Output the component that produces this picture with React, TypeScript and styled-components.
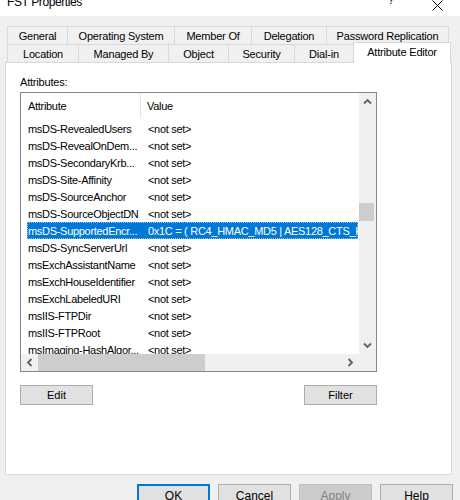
import React from 'react';
import styled, { createGlobalStyle } from 'styled-components';

const GlobalStyle = createGlobalStyle`
    body {
        margin: 0;
        background: #f0f0f0;
        font-family: "Liberation Sans", Arial, sans-serif;
        font-size: 11px;
        color: #000;
    }
`;

const Window = styled.div`
    width: 460px;
    height: 500px;
    overflow: hidden;
    display: flex;
    flex-direction: column;
    background: #f0f0f0;
`;

const TitleBar = styled.div`
    height: 16px;
    flex: none;
    background: #fff;
    display: flex;
    align-items: flex-end;
    overflow: hidden;
    padding: 0 0 7px 7px;
    box-sizing: border-box;
`;

const Title = styled.div`
    font-size: 12px;
    line-height: 14px;
    letter-spacing: -0.4px;
    flex: 1;
`;

const TitleHelp = styled.div`
    font-size: 12px;
    line-height: 14px;
    width: 46px;
    text-align: center;
    margin-bottom: 2px;
`;

const CloseBox = styled.div`
    width: 46px;
    display: flex;
    justify-content: center;
    margin-bottom: -2px;
`;

const Body = styled.div`
    padding: 10px 0 0 5px;
    display: flex;
    flex-direction: column;
`;

const TabRow = styled.div`
    display: flex;
    align-items: flex-end;
    height: 18px;
    margin-left: 2px;
    position: relative;
`;

const Tab = styled.div<{ w: number; active?: boolean }>`
    width: ${p => p.w}px;
    height: ${p => (p.active ? 21 : 18)}px;
    box-sizing: border-box;
    display: flex;
    align-items: center;
    justify-content: center;
    white-space: nowrap;
    letter-spacing: -0.2px;
    background: ${p => (p.active ? '#fff' : '#f0f0f0')};
    border: 1px solid #d9d9d9;
    border-right: ${p => (p.active ? '1px solid #d9d9d9' : 'none')};
    border-bottom: none;
    margin-bottom: ${p => (p.active ? -1 : 0)}px;
    padding-bottom: ${p => (p.active ? 3 : 0)}px;
    position: relative;
    z-index: ${p => (p.active ? 2 : 0)};
    &:last-child {
        border-right: 1px solid #d9d9d9;
    }
`;

const Panel = styled.div`
    width: 447px;
    height: 413px;
    box-sizing: border-box;
    background: #fff;
    border: 1px solid #d9d9d9;
    padding: 12px 0 0 14px;
    display: flex;
    flex-direction: column;
    position: relative;
    z-index: 1;
`;

const Label = styled.div`
    line-height: 14px;
    margin-bottom: 3px;
    letter-spacing: -0.2px;
`;

const ListBox = styled.div`
    width: 357px;
    height: 280px;
    box-sizing: border-box;
    border: 1px solid #828790;
    display: grid;
    grid-template-columns: 1fr 17px;
    grid-template-rows: 1fr 17px;
    background: #fff;
`;

const Viewport = styled.div`
    overflow: hidden;
    display: flex;
    flex-direction: column;
`;

const HeaderRow = styled.div`
    display: flex;
    height: 25px;
    flex: none;
    margin-bottom: 2px;
`;

const HeaderCell = styled.div<{ w?: number }>`
    ${p => (p.w ? `width: ${p.w}px; border-right: 1px solid #e5e5e5;` : 'flex: 1;')}
    box-sizing: border-box;
    display: flex;
    align-items: center;
    padding-left: ${p => (p.w ? 7 : 6)}px;
    letter-spacing: -0.3px;
`;

const Row = styled.div<{ selected?: boolean }>`
    display: flex;
    height: 17px;
    flex: none;
    margin-left: 6px;
    width: 331px;
    overflow: hidden;
    align-items: center;
    white-space: nowrap;
    letter-spacing: -0.3px;
    background: ${p => (p.selected ? '#0078d7' : 'transparent')};
    color: ${p => (p.selected ? '#fff' : '#000')};
    outline: ${p => (p.selected ? '1px dotted rgba(255,255,255,0.55)' : 'none')};
    outline-offset: -1px;
`;

const NameCell = styled.div`
    width: 114px;
    flex: none;
    padding-left: 1px;
    box-sizing: border-box;
    overflow: hidden;
`;

const ValueCell = styled.div`
    padding-left: 7px;
`;

const VScroll = styled.div`
    background: #f0f0f0;
    display: flex;
    flex-direction: column;
`;

const HScroll = styled.div`
    background: #f0f0f0;
    display: flex;
    align-items: stretch;
`;

const Corner = styled.div`
    background: #f0f0f0;
`;

const ArrowButton = styled.div`
    width: 17px;
    height: 17px;
    flex: none;
    display: flex;
    align-items: center;
    justify-content: center;
`;

const Track = styled.div<{ horizontal?: boolean }>`
    flex: 1;
    display: flex;
    flex-direction: ${p => (p.horizontal ? 'row' : 'column')};
`;

const Thumb = styled.div<{ offset: number; size: number; horizontal?: boolean }>`
    background: #cdcdcd;
    ${p =>
        p.horizontal
            ? `width: ${p.size}px; margin-left: ${p.offset}px; height: 17px;`
            : `height: ${p.size}px; margin-top: ${p.offset}px; width: 15px; margin-left: 0;`}
`;

const ActionRow = styled.div`
    width: 357px;
    display: flex;
    justify-content: space-between;
    margin-top: 13px;
`;

const Button = styled.button<{ tall?: boolean; focused?: boolean }>`
    width: 73px;
    height: ${p => (p.tall ? 23 : 20)}px;
    box-sizing: border-box;
    background: ${p => (p.disabled ? '#cccccc' : '#e1e1e1')};
    border: ${p => (p.focused ? '2px solid #0078d7' : p.disabled ? '1px solid #bfbfbf' : '1px solid #adadad')};
    color: ${p => (p.disabled ? '#838383' : '#000')};
    font-family: "Liberation Sans", Arial, sans-serif;
    font-size: ${p => (p.tall ? 12 : 11)}px;
    padding: 0;
    border-radius: 0;
`;

const DialogButtons = styled.div`
    display: flex;
    justify-content: flex-end;
    gap: 8px;
    padding-right: 7px;
    margin-top: 9px;
`;

type Attr = { name: string; value: string; selected?: boolean };

const attributes: Attr[] = [
    { name: 'msDS-RevealedUsers', value: '<not set>' },
    { name: 'msDS-RevealOnDem...', value: '<not set>' },
    { name: 'msDS-SecondaryKrb...', value: '<not set>' },
    { name: 'msDS-Site-Affinity', value: '<not set>' },
    { name: 'msDS-SourceAnchor', value: '<not set>' },
    { name: 'msDS-SourceObjectDN', value: '<not set>' },
    {
        name: 'msDS-SupportedEncr...',
        value: '0x1C = ( RC4_HMAC_MD5 | AES128_CTS_HMAC_SHA1_96 | AES256_CTS_HMAC_SHA1_96 )',
        selected: true,
    },
    { name: 'msDS-SyncServerUrl', value: '<not set>' },
    { name: 'msExchAssistantName', value: '<not set>' },
    { name: 'msExchHouseIdentifier', value: '<not set>' },
    { name: 'msExchLabeledURI', value: '<not set>' },
    { name: 'msIIS-FTPDir', value: '<not set>' },
    { name: 'msIIS-FTPRoot', value: '<not set>' },
    { name: 'msImaging-HashAlgor...', value: '<not set>' },
];

const topTabs = [
    { label: 'General', w: 60 },
    { label: 'Operating System', w: 107 },
    { label: 'Member Of', w: 77 },
    { label: 'Delegation', w: 75 },
    { label: 'Password Replication', w: 123 },
];

const bottomTabs = [
    { label: 'Location', w: 71 },
    { label: 'Managed By', w: 90 },
    { label: 'Object', w: 60 },
    { label: 'Security', w: 66 },
    { label: 'Dial-in', w: 59 },
    { label: 'Attribute Editor', w: 98, active: true },
];

// small scrollbar chevron, rotated per direction
function Chevron({ dir }: { dir: 'up' | 'down' | 'left' | 'right' }) {
    const rot = { up: 0, down: 180, left: 270, right: 90 }[dir];
    return (
        <svg width="9" height="9" viewBox="0 0 9 9" style={{ transform: `rotate(${rot}deg)` }}>
            <path d="M1 6.5 L4.5 3 L8 6.5" fill="none" stroke="#606060" strokeWidth="1.8" />
        </svg>
    );
}

function App(): JSX.Element {
    return (
        <Window>
            <GlobalStyle />
            <TitleBar>
                <Title>FST Properties</Title>
                <TitleHelp>?</TitleHelp>
                <CloseBox>
                    <svg width="11" height="11" viewBox="0 0 11 11">
                        <path d="M0.5 0.5 L10.5 10.5 M10.5 0.5 L0.5 10.5" stroke="#000" strokeWidth="1" />
                    </svg>
                </CloseBox>
            </TitleBar>
            <Body>
                <TabRow>
                    {topTabs.map(t => (
                        <Tab key={t.label} w={t.w}>{t.label}</Tab>
                    ))}
                </TabRow>
                <TabRow>
                    {bottomTabs.map(t => (
                        <Tab key={t.label} w={t.w} active={t.active}>{t.label}</Tab>
                    ))}
                </TabRow>
                <Panel>
                    <Label>Attributes:</Label>
                    <ListBox>
                        <Viewport>
                            <HeaderRow>
                                <HeaderCell w={120}>Attribute</HeaderCell>
                                <HeaderCell>Value</HeaderCell>
                            </HeaderRow>
                            {attributes.map(a => (
                                <Row key={a.name} selected={a.selected}>
                                    <NameCell>{a.name}</NameCell>
                                    <ValueCell>{a.value}</ValueCell>
                                </Row>
                            ))}
                        </Viewport>
                        <VScroll>
                            <ArrowButton><Chevron dir="up" /></ArrowButton>
                            <Track>
                                <Thumb offset={93} size={18} />
                            </Track>
                            <ArrowButton><Chevron dir="down" /></ArrowButton>
                        </VScroll>
                        <HScroll>
                            <ArrowButton><Chevron dir="left" /></ArrowButton>
                            <Track horizontal>
                                <Thumb horizontal offset={0} size={167} />
                            </Track>
                            <ArrowButton><Chevron dir="right" /></ArrowButton>
                        </HScroll>
                        <Corner />
                    </ListBox>
                    <ActionRow>
                        <Button>Edit</Button>
                        <Button>Filter</Button>
                    </ActionRow>
                </Panel>
                <DialogButtons>
                    <Button tall focused>OK</Button>
                    <Button tall>Cancel</Button>
                    <Button tall disabled>Apply</Button>
                    <Button tall>Help</Button>
                </DialogButtons>
            </Body>
        </Window>
    );
}

export default App;
